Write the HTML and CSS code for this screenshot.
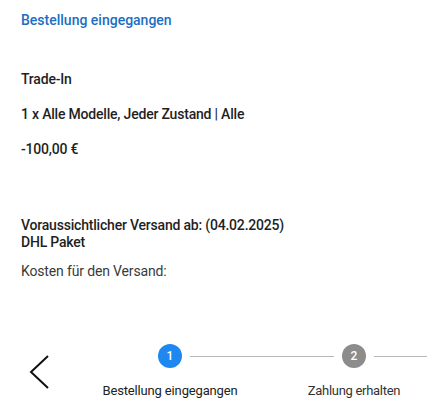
FILE: index.html
```html
<!DOCTYPE html>
<html lang="de">
<head>
<meta charset="utf-8">
<title>Bestellung</title>
<link rel="stylesheet" href="styles.css">
</head>
<body>
<main class="page">
  <h1 class="status">Bestellung eingegangen</h1>
  <section class="tradein">
    <p class="strong">Trade-In</p>
    <p class="strong">1 x Alle Modelle, Jeder Zustand | Alle</p>
    <p class="strong">-100,00 €</p>
  </section>
  <section class="shipping">
    <p class="strong tight">Voraussichtlicher Versand ab: (04.02.2025)</p>
    <p class="strong tight">DHL Paket</p>
    <p class="cost">Kosten für den Versand:</p>
  </section>
</main>
<nav class="stepper">
  <button class="back" aria-label="Zurück">
    <svg width="20" height="34" viewBox="0 0 20 34"><polyline points="19,1 2,17 19,33" fill="none" stroke="#111" stroke-width="2"/></svg>
  </button>
  <ol class="steps">
    <li class="step first active">
      <div class="step-head"><span class="line"></span><span class="dot">1</span><span class="line"></span></div>
      <span class="label">Bestellung eingegangen</span>
    </li>
    <li class="step">
      <div class="step-head"><span class="line"></span><span class="dot">2</span><span class="line"></span></div>
      <span class="label light">Zahlung erhalten</span>
    </li>
  </ol>
</nav>
</body>
</html>
```

FILE: styles.css
```css
html, body {
  margin: 0;
  padding: 0;
  background: #fff;
  overflow: hidden;
}
body {
  font-family: Roboto, "Liberation Sans", sans-serif;
  color: #1f1f1f;
  width: 427px;
}
.page {
  padding: 11px 21px 0;
}
p, h1 {
  margin: 0;
}
.status {
  font-size: 14px;
  line-height: 18px;
  font-weight: 500;
  color: #1b6ec2;
}
.tradein {
  margin-top: 41px;
  display: flex;
  flex-direction: column;
  gap: 17px;
}
.strong {
  font-size: 14px;
  line-height: 18px;
  font-weight: 500;
  letter-spacing: -0.2px;
  color: #1f1f1f;
}
.shipping {
  margin-top: 59px;
  display: flex;
  flex-direction: column;
}
.tight {
  line-height: 17px;
}
.cost {
  margin-top: 11px;
  font-size: 14px;
  line-height: 18px;
  font-weight: 400;
  letter-spacing: -0.15px;
  color: #3a3a3a;
}
.stepper {
  margin-top: 64px;
  display: flex;
  align-items: flex-start;
  overflow: hidden;
}
.back {
  margin: 11px 29px 0 29px;
  padding: 0;
  border: 0;
  background: none;
  width: 20px;
  height: 34px;
  flex: none;
}
.back svg {
  display: block;
}
.steps {
  list-style: none;
  margin: 0;
  padding: 0;
  display: flex;
}
.step {
  flex: none;
  width: 184px;
  display: flex;
  flex-direction: column;
  align-items: center;
}
.step-head {
  width: 100%;
  display: grid;
  grid-template-columns: 1fr 24px 1fr;
  column-gap: 8px;
  align-items: center;
  height: 24px;
}
.line {
  height: 1px;
  background: #b8b8b8;
}
.first .step-head .line:first-child {
  visibility: hidden;
}
.dot {
  width: 24px;
  height: 24px;
  border-radius: 50%;
  background: #8c8c8c;
  color: #fff;
  font-size: 12px;
  font-weight: 500;
  display: flex;
  align-items: center;
  justify-content: center;
}
.active .dot {
  background: #1e88f0;
}
.label {
  margin-top: 15px;
  font-size: 13px;
  line-height: 16px;
  letter-spacing: -0.15px;
  color: #222;
  white-space: nowrap;
}
.label.light {
  color: #333;
  letter-spacing: -0.3px;
}
```
